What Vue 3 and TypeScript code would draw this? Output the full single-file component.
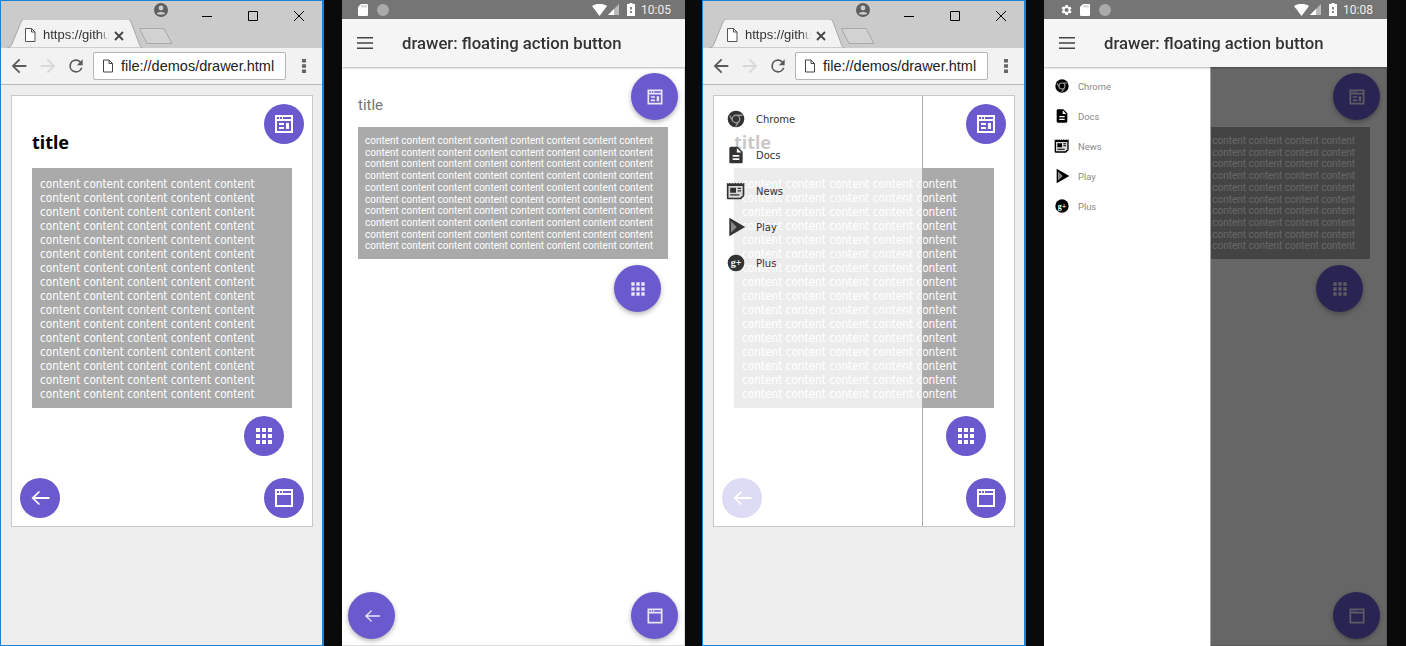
<script setup lang="ts">
const desktops = [{ drawer: false }, { drawer: true }]
const phones = [
  { time: '10:05', drawer: false },
  { time: '10:08', drawer: true }
]

const ARROW = 'M20 11H7.83l5.59-5.59L12 4l-8 8 8 8 1.41-1.41L7.83 13H20v-2z'
const THIN_ARROW = 'M21.5 11.1H7l5-5-1.1-1.1L3.5 12l7.4 7 1.1-1.1-5-5h14.5z'
const APPS =
  'M4 8h4V4H4v4zm6 12h4v-4h-4v4zm-6 0h4v-4H4v4zm0-6h4v-4H4v4zm6 0h4v-4h-4v4zm6-10v4h4V4h-4zm-6 4h4V4h-4v4zm6 6h4v-4h-4v4zm0 6h4v-4h-4v4z'
const WINDOW = 'M3 3h18v18H3zM5 9v10h14V9zM5 5v2h2V5zM8 5v2h2V5zM11 5v2h8V5z'
const LAYOUT = WINDOW + 'M7 11h5v2H7zM7 15h5v2H7zM14 11h3v6h-3z'

const menu = [
  {
    label: 'Chrome',
    parts: [
      { d: 'M12 2a10 10 0 1 0 0 20 10 10 0 0 0 0-20z', fill: 'currentColor' },
      { d: 'M12 7.5a4.5 4.5 0 1 0 0 9 4.5 4.5 0 0 0 0-9zM12 7.5h8M8.2 14.5 4.5 8M15.8 14.5 11.5 21', stroke: '#999' }
    ]
  },
  {
    label: 'Docs',
    parts: [
      {
        d: 'M14 2H6c-1.1 0-2 .9-2 2v16c0 1.1.9 2 2 2h12c1.1 0 2-.9 2-2V8l-6-6zm2 16H8v-2h8v2zm0-4H8v-2h8v2zm-3-5V3.5L18.5 9H13z',
        fill: 'currentColor'
      }
    ]
  },
  {
    label: 'News',
    parts: [
      {
        d: 'M1 2l1.7 1.2L4.4 2l1.7 1.2L7.8 2l1.7 1.2L11.2 2l1.7 1.2L14.6 2l1.7 1.2L18 2l1.7 1.2L22 2v16l-4 4H2l-1-1z',
        fill: 'currentColor'
      },
      { d: 'M3 6h17v11l-3 3H3z', fill: '#d8d8d8' },
      { d: 'M5 8h7v6H5zM14 8h4v1.5h-4zM14 11h4v1.5h-4zM5 16h11v1.5H5z', fill: 'currentColor' }
    ]
  },
  {
    label: 'Play',
    parts: [
      { d: 'M4 1v22l19-11z', fill: 'currentColor' },
      { d: 'M6 5v14l7-7z', fill: '#888' }
    ]
  },
  {
    label: 'Plus',
    parts: [{ d: 'M12 2a10 10 0 1 0 0 20 10 10 0 0 0 0-20z', fill: 'currentColor' }],
    glyph: 'g+'
  }
]
</script>

<template>
  <div class="screen">
    <template v-for="(desk, i) in desktops" :key="'d' + i">
      <!-- chrome window on windows -->
      <section class="browser">
        <header class="strip">
          <div class="tab">
            <svg class="tab-shape" width="136" height="29" viewBox="0 0 136 29">
              <path d="M0 29C3 29 4 27 5 25L14 3C15 1 16 0 18 0H120C122 0 123 1 124 3L133 27C134 28 135 29 136 29Z" fill="#f2f2f2" stroke="#a8a8a8" />
            </svg>
            <svg class="tab-file" width="16" height="16" viewBox="0 0 16 16">
              <path d="M3.5 1.5h6l3.5 3.5v9.5h-9.5zM9.5 1.5V5H13" fill="#fff" stroke="#555" />
            </svg>
            <span class="tab-title">https://githu</span>
            <svg class="tab-close" width="10" height="10" viewBox="0 0 10 10">
              <path d="M1 1l8 8M9 1l-8 8" stroke="#444" stroke-width="1.8" />
            </svg>
          </div>
          <svg class="new-tab" width="36" height="18" viewBox="0 0 36 18">
            <path d="M1.5 1.5H26L34 16.5H9Z" fill="#d2d2d2" stroke="#a8a8a8" />
          </svg>
          <svg class="avatar" width="14" height="14" viewBox="0 0 14 14">
            <circle cx="7" cy="7" r="7" fill="#5f5f5f" />
            <circle cx="7" cy="5" r="2.4" fill="#ccc" />
            <path d="M2.8 10.6C4 8.6 10 8.6 11.2 10.6C10 12.2 4 12.2 2.8 10.6Z" fill="#ccc" />
          </svg>
          <div class="win-controls">
            <svg width="10" height="10" viewBox="0 0 10 10"><path d="M0 5.5h10" stroke="#000" /></svg>
            <svg width="10" height="10" viewBox="0 0 10 10"><path d="M.5.5h9v9h-9z" fill="none" stroke="#000" /></svg>
            <svg width="10" height="10" viewBox="0 0 10 10"><path d="M0 0l10 10M10 0L0 10" stroke="#000" /></svg>
          </div>
        </header>

        <nav class="toolbar">
          <svg class="tool" width="22" height="22" viewBox="0 0 24 24"><path :d="ARROW" fill="#5a5a5a" /></svg>
          <svg class="tool" width="22" height="22" viewBox="0 0 24 24"><path :d="ARROW" fill="#d8d8d8" transform="matrix(-1 0 0 1 24 0)" /></svg>
          <svg class="tool" width="20" height="20" viewBox="0 0 24 24">
            <path d="M17.65 6.35A7.96 7.96 0 0 0 12 4a8 8 0 1 0 7.73 10h-2.08A6 6 0 1 1 12 6c1.66 0 3.14.69 4.22 1.78L13 11h7V4l-2.35 2.35z" fill="#5a5a5a" />
          </svg>
          <div class="address">
            <svg width="12" height="14" viewBox="0 0 12 14">
              <path d="M1.5 1H7l3.5 3.5V13h-9zM7 1v3.5h3.5" fill="#fff" stroke="#444" />
            </svg>
            <span>file://demos/drawer.html</span>
          </div>
          <svg class="more" width="4" height="14" viewBox="0 0 4 14">
            <path d="M0 0h4v3.4H0zM0 5.3h4v3.4H0zM0 10.6h4V14H0z" fill="#666" />
          </svg>
        </nav>

        <main class="desk-page">
          <div class="card">
            <h1 class="card-title">title</h1>
            <div class="card-box">{{ 'content '.repeat(80) }}</div>

            <button class="fab fab-top"><svg viewBox="0 0 24 24"><path :d="LAYOUT" fill-rule="evenodd" /></svg></button>
            <button class="fab fab-mid"><svg viewBox="0 0 24 24"><path :d="APPS" /></svg></button>
            <button class="fab fab-left"><svg viewBox="0 0 24 24"><path :d="THIN_ARROW" /></svg></button>
            <button class="fab fab-right"><svg viewBox="0 0 24 24"><path :d="WINDOW" fill-rule="evenodd" /></svg></button>

            <aside v-if="desk.drawer" class="drawer">
              <div v-for="item in menu" :key="item.label" class="drawer-item">
                <svg viewBox="0 0 24 24">
                  <path
                    v-for="part in item.parts"
                    :key="part.d"
                    :d="part.d"
                    :fill="part.fill || 'none'"
                    :stroke="part.stroke"
                    stroke-width="1.6"
                  />
                  <text v-if="item.glyph" x="12" y="16" text-anchor="middle" class="glyph">{{ item.glyph }}</text>
                </svg>
                <span>{{ item.label }}</span>
              </div>
            </aside>
          </div>
        </main>
      </section>

      <!-- android emulator -->
      <section class="phone">
        <div class="status">
          <svg v-if="phones[i].drawer" class="gear" width="14" height="14" viewBox="0 0 24 24">
            <path d="M19.4 13a7.5 7.5 0 0 0 0-2l2.1-1.6-2-3.5-2.5 1a7.4 7.4 0 0 0-1.7-1L15 3.3h-4l-.4 2.6a7.4 7.4 0 0 0-1.7 1l-2.5-1-2 3.5L6.6 11a7.5 7.5 0 0 0 0 2l-2.1 1.6 2 3.5 2.5-1c.5.4 1.1.7 1.7 1l.4 2.6h4l.4-2.6c.6-.3 1.2-.6 1.7-1l2.5 1 2-3.5zM13 15.5a3.5 3.5 0 1 1 0-7 3.5 3.5 0 0 1 0 7z" fill="#fff" />
          </svg>
          <svg width="10" height="12" viewBox="0 0 10 12"><path d="M3 0h6a1 1 0 0 1 1 1v10a1 1 0 0 1-1 1H1a1 1 0 0 1-1-1V3z" fill="#fff" /><path d="M4 1v2.5M6 1v2.5M8 1v2.5" stroke="#999" stroke-width=".7" /></svg>
          <span class="status-dot"></span>
          <span class="status-gap"></span>
          <svg width="15" height="12" viewBox="0 0 15 12"><path d="M0 2C4-.6 11-.6 15 2L7.5 12z" fill="#fff" /></svg>
          <svg class="signal" width="11" height="11" viewBox="0 0 11 11"><path d="M0 11L11 0v11z" fill="#bbb" /><path d="M0 11l6-6v6z" fill="#fff" /></svg>
          <svg class="battery" width="8" height="13" viewBox="0 0 8 13"><path d="M2.5 0h3v1H8v12H0V1h2.5z" fill="#fff" /><path d="M3 4h2v2.5H3zM3 8h2v2H3z" fill="#888" /></svg>
          <span class="clock">{{ phones[i].time }}</span>
        </div>
        <header class="appbar">
          <svg width="16" height="12" viewBox="0 0 16 12"><path d="M0 0h16v1.6H0zM0 5.2h16v1.6H0zM0 10.4h16V12H0z" fill="#444" /></svg>
          <span>drawer: floating action button</span>
        </header>
        <main class="phone-page">
          <h1 class="phone-title">title</h1>
          <div class="phone-box">{{ 'content '.repeat(80) }}</div>

          <button class="fab big big-top"><svg viewBox="0 0 24 24"><path :d="LAYOUT" fill-rule="evenodd" /></svg></button>
          <button class="fab big big-mid"><svg viewBox="0 0 24 24"><path :d="APPS" /></svg></button>
          <button class="fab big big-left"><svg viewBox="0 0 24 24"><path :d="THIN_ARROW" /></svg></button>
          <button class="fab big big-right"><svg viewBox="0 0 24 24"><path :d="WINDOW" fill-rule="evenodd" /></svg></button>

          <template v-if="phones[i].drawer">
            <div class="scrim"></div>
            <aside class="phone-drawer">
              <div v-for="item in menu" :key="item.label" class="phone-item">
                <svg viewBox="0 0 24 24">
                  <path
                    v-for="part in item.parts"
                    :key="part.d"
                    :d="part.d"
                    :fill="part.fill || 'none'"
                    :stroke="part.stroke"
                    stroke-width="1.6"
                  />
                  <text v-if="item.glyph" x="12" y="16" text-anchor="middle" class="glyph">{{ item.glyph }}</text>
                </svg>
                <span>{{ item.label }}</span>
              </div>
            </aside>
          </template>
        </main>
      </section>
    </template>
  </div>
</template>

<style>
html,
body {
  background: #0a0a0a;
  overflow: hidden;
}
</style>

<style scoped>
.screen {
  display: flex;
  width: 1406px;
  height: 646px;
  overflow: hidden;
  background: #0a0a0a;
}

/* browser window */
.browser {
  display: flex;
  flex-direction: column;
  flex: none;
  width: 324px;
  height: 646px;
  box-sizing: border-box;
  border: 1px solid #1883d7;
  border-right-width: 2px;
  background: #ededed;
  font-family: "DejaVu Sans", sans-serif;
}

.strip {
  position: relative;
  display: flex;
  align-items: flex-end;
  flex: none;
  height: 47px;
  padding-left: 6px;
  box-sizing: border-box;
  background: #cbcbcb;
}

.tab {
  position: relative;
  width: 136px;
  height: 28px;
  flex: none;
}

.tab-shape {
  position: absolute;
  left: 0;
  top: -1px;
}

.tab-file {
  position: absolute;
  left: 15px;
  top: 7px;
}

.tab-title {
  position: absolute;
  left: 36px;
  top: 7px;
  width: 66px;
  white-space: nowrap;
  font-family: "Liberation Sans", sans-serif;
  font-size: 13px;
  color: #333;
  mask-image: linear-gradient(90deg, #000 85%, transparent);
}

.tab-close {
  position: absolute;
  left: 107px;
  top: 11px;
}

.new-tab {
  margin: 0 0 3px -5px;
  flex: none;
}

.avatar {
  position: absolute;
  left: 153px;
  top: 2px;
}

.win-controls {
  position: absolute;
  left: 201px;
  top: 10px;
  display: flex;
  gap: 36px;
}

.toolbar {
  display: flex;
  align-items: center;
  flex: none;
  height: 37px;
  box-sizing: border-box;
  padding-left: 7px;
  background: #f2f2f2;
  border-bottom: 1px solid #b8b8b8;
}

.tool {
  flex: none;
  margin-right: 7px;
}

.address {
  display: flex;
  align-items: center;
  gap: 7px;
  flex: none;
  width: 193px;
  height: 28px;
  padding-left: 8px;
  box-sizing: border-box;
  background: #fff;
  border: 1px solid #b5b5b5;
  border-radius: 2px;
  font-family: "Liberation Sans", sans-serif;
  font-size: 14.5px;
  color: #222;
  white-space: nowrap;
}

.more {
  margin-left: 16px;
}

.desk-page {
  flex: 1;
  padding: 10px 9px 0 10px;
}

.card {
  position: relative;
  height: 432px;
  box-sizing: border-box;
  padding: 33px 20px 0 20px;
  background: #fff;
  border: 1px solid #c8c8c8;
}

.card-title {
  margin: 0 0 13px;
  font-family: "Noto Sans", sans-serif;
  font-size: 18px;
  line-height: 26px;
  font-weight: 700;
  color: #000;
}

.card-box {
  height: 240px;
  box-sizing: border-box;
  padding: 9px 8px 7px;
  overflow: hidden;
  background: #aaa;
  color: #fff;
  font-family: "DejaVu Sans", sans-serif;
  font-stretch: condensed;
  font-size: 11.7px;
  line-height: 14px;
}

.fab {
  position: absolute;
  display: flex;
  align-items: center;
  justify-content: center;
  width: 40px;
  height: 40px;
  padding: 0;
  border: 0;
  border-radius: 50%;
  background: #6a5acd;
}

.fab svg {
  width: 24px;
  height: 24px;
  fill: #fff;
}

.fab-top {
  top: 8px;
  right: 8px;
}

.fab-mid {
  top: 320px;
  right: 28px;
}

.fab-left {
  top: 382px;
  left: 8px;
}

.fab-right {
  top: 382px;
  right: 8px;
}

.drawer {
  position: absolute;
  left: 0;
  top: 0;
  bottom: 0;
  width: 209px;
  box-sizing: border-box;
  padding-top: 5px;
  background: rgba(255, 255, 255, 0.78);
  border-right: 1px solid #aaa;
}

.drawer-item {
  display: flex;
  align-items: center;
  height: 36px;
  padding-left: 12px;
  color: #333;
  font-size: 10px;
}

.drawer-item svg {
  width: 20px;
  height: 20px;
  margin-right: 10px;
  flex: none;
}

.glyph {
  font-family: "Liberation Serif", serif;
  font-size: 12px;
  font-weight: 700;
  fill: #fff;
}

/* android */
.phone {
  display: flex;
  flex-direction: column;
  flex: none;
  width: 343px;
  height: 646px;
  margin: 0 17px 0 18px;
  font-family: Roboto, sans-serif;
  filter: blur(0.35px);
}

.status {
  display: flex;
  align-items: center;
  gap: 9px;
  flex: none;
  height: 19px;
  padding: 0 14px 0 16px;
  box-sizing: border-box;
  background: #757575;
}

.status svg {
  flex: none;
}

.status-dot {
  width: 12px;
  height: 12px;
  border-radius: 50%;
  background: #aaa;
}

.status-gap {
  flex: 1;
}

.status .gear {
  margin: 0 -2px 0 -1px;
}

.status .signal {
  margin-left: -8px;
}

.status .battery {
  margin-left: -1px;
}

.clock {
  margin-left: -3px;
  color: #eee;
  font-size: 12px;
}

.appbar {
  position: relative;
  z-index: 3;
  display: flex;
  align-items: center;
  gap: 29px;
  flex: none;
  height: 48px;
  padding-left: 15px;
  box-sizing: border-box;
  background: #f5f5f5;
  box-shadow: 0 1px 2px rgba(0, 0, 0, 0.3);
  color: #333;
  font-size: 16.7px;
  font-weight: 500;
  white-space: nowrap;
}

.phone-page {
  position: relative;
  flex: 1;
  overflow: hidden;
  padding: 29px 17px 0 16px;
  background: #fff;
  box-shadow: inset -1px -1px 0 #ddd;
}

.phone-title {
  margin: 0 0 13px;
  font-size: 15px;
  line-height: 18px;
  font-weight: 400;
  color: #757575;
}

.phone-box {
  height: 132px;
  box-sizing: border-box;
  padding: 8px 7px;
  overflow: hidden;
  background: #aaa;
  color: #fff;
  font-size: 10px;
  line-height: 11.7px;
}

.big {
  width: 47px;
  height: 47px;
  box-shadow: 0 2px 5px rgba(0, 0, 0, 0.3);
}

.big svg {
  width: 20px;
  height: 20px;
  opacity: 0.85;
}

.big-top {
  top: 6px;
  right: 7px;
}

.big-mid {
  top: 198px;
  right: 24px;
}

.big-left {
  top: 525px;
  left: 6px;
}

.big-right {
  top: 525px;
  right: 7px;
}

.scrim {
  position: absolute;
  inset: 0;
  background: rgba(0, 0, 0, 0.6);
}

.phone-drawer {
  position: absolute;
  left: 0;
  top: 0;
  bottom: 0;
  width: 167px;
  box-sizing: border-box;
  padding-top: 4px;
  background: #fff;
  border-right: 1px solid #a0a0a0;
}

.phone-item {
  display: flex;
  align-items: center;
  height: 30px;
  padding-left: 10px;
  color: #000;
}

.phone-item svg {
  width: 16px;
  height: 16px;
  margin-right: 8px;
  flex: none;
}

.phone-item span {
  color: #8a8a8a;
  font-size: 9.4px;
}
</style>
